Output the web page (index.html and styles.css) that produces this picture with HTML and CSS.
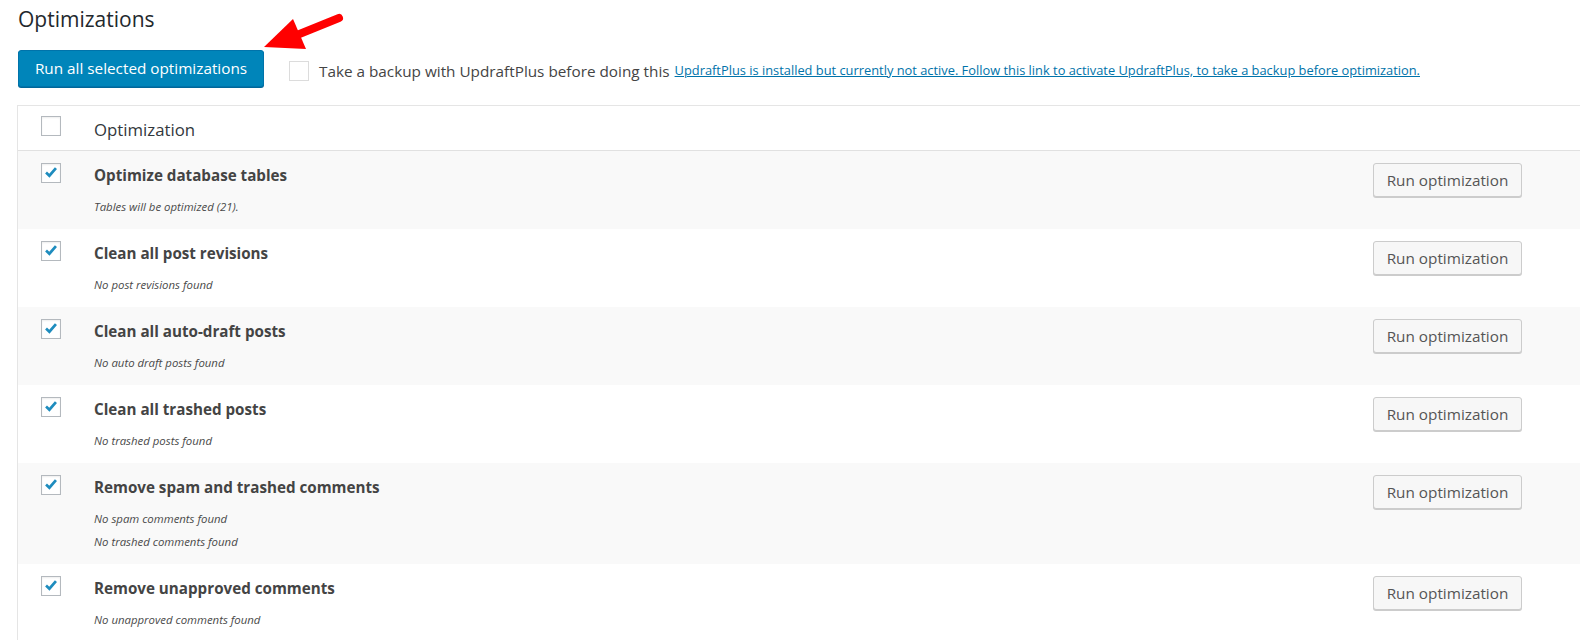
FILE: index.html
```html
<!DOCTYPE html>
<html lang="en">
<head>
<meta charset="utf-8">
<title>Optimizations</title>
<link rel="stylesheet" href="styles.css">
</head>
<body>
<div class="page">
  <h2 class="page-title">Optimizations</h2>
  <div class="toolbar">
    <button class="btn-primary">Run all selected optimizations</button>
    <label class="backup">
      <span class="cb"></span>
      <span class="backup-text">Take a backup with UpdraftPlus before doing this</span>
    </label>
    <a class="activate-link" href="#">UpdraftPlus is installed but currently not active. Follow this link to activate UpdraftPlus, to take a backup before optimization.</a>
    <svg class="arrow" width="90" height="50" viewBox="0 0 90 50">
      <line x1="42" y1="26" x2="84" y2="9" stroke="#f00" stroke-width="8" stroke-linecap="round"/>
      <polygon points="9,38 38,10 51,40" fill="#f00"/>
    </svg>
  </div>

  <div class="opt-table">
    <div class="head">
      <div class="cell-check"><span class="cb"></span></div>
      <div class="head-label">Optimization</div>
    </div>

    <div class="row alt">
      <div class="cell-check"><span class="cb checked"><svg viewBox="0 0 20 20"><path d="M4.5 9.5 L8.2 13 L15.5 4.5" fill="none" stroke="#1e8cbe" stroke-width="3" stroke-linejoin="miter"/></svg></span></div>
      <div class="cell-main">
        <div class="opt-title">Optimize database tables</div>
        <div class="opt-desc">Tables will be optimized (21).</div>
      </div>
      <div class="cell-action"><button class="btn-secondary">Run optimization</button></div>
    </div>

    <div class="row">
      <div class="cell-check"><span class="cb checked"><svg viewBox="0 0 20 20"><path d="M4.5 9.5 L8.2 13 L15.5 4.5" fill="none" stroke="#1e8cbe" stroke-width="3" stroke-linejoin="miter"/></svg></span></div>
      <div class="cell-main">
        <div class="opt-title">Clean all post revisions</div>
        <div class="opt-desc">No post revisions found</div>
      </div>
      <div class="cell-action"><button class="btn-secondary">Run optimization</button></div>
    </div>

    <div class="row alt">
      <div class="cell-check"><span class="cb checked"><svg viewBox="0 0 20 20"><path d="M4.5 9.5 L8.2 13 L15.5 4.5" fill="none" stroke="#1e8cbe" stroke-width="3" stroke-linejoin="miter"/></svg></span></div>
      <div class="cell-main">
        <div class="opt-title">Clean all auto-draft posts</div>
        <div class="opt-desc">No auto draft posts found</div>
      </div>
      <div class="cell-action"><button class="btn-secondary">Run optimization</button></div>
    </div>

    <div class="row">
      <div class="cell-check"><span class="cb checked"><svg viewBox="0 0 20 20"><path d="M4.5 9.5 L8.2 13 L15.5 4.5" fill="none" stroke="#1e8cbe" stroke-width="3" stroke-linejoin="miter"/></svg></span></div>
      <div class="cell-main">
        <div class="opt-title">Clean all trashed posts</div>
        <div class="opt-desc">No trashed posts found</div>
      </div>
      <div class="cell-action"><button class="btn-secondary">Run optimization</button></div>
    </div>

    <div class="row alt">
      <div class="cell-check"><span class="cb checked"><svg viewBox="0 0 20 20"><path d="M4.5 9.5 L8.2 13 L15.5 4.5" fill="none" stroke="#1e8cbe" stroke-width="3" stroke-linejoin="miter"/></svg></span></div>
      <div class="cell-main">
        <div class="opt-title">Remove spam and trashed comments</div>
        <div class="opt-desc">No spam comments found</div>
        <div class="opt-desc">No trashed comments found</div>
      </div>
      <div class="cell-action"><button class="btn-secondary">Run optimization</button></div>
    </div>

    <div class="row">
      <div class="cell-check"><span class="cb checked"><svg viewBox="0 0 20 20"><path d="M4.5 9.5 L8.2 13 L15.5 4.5" fill="none" stroke="#1e8cbe" stroke-width="3" stroke-linejoin="miter"/></svg></span></div>
      <div class="cell-main">
        <div class="opt-title">Remove unapproved comments</div>
        <div class="opt-desc">No unapproved comments found</div>
      </div>
      <div class="cell-action"><button class="btn-secondary">Run optimization</button></div>
    </div>
  </div>
</div>
</body>
</html>
```

FILE: styles.css
```css
html, body {
  margin: 0;
  padding: 0;
  background: #ffffff;
  overflow: hidden;
}

body {
  font-family: "Open Sans", "Noto Sans", "Liberation Sans", sans-serif;
  color: #444444;
}

.page {
  padding: 4px 0 0 17px;
}

.page-title {
  margin: 0 0 0 1px;
  font-size: 21px;
  line-height: 30px;
  font-weight: 400;
  color: #23282d;
}

.toolbar {
  position: relative;
  display: flex;
  align-items: center;
  margin-top: 15px;
  height: 38px;
}

.btn-primary {
  margin-left: 1px;
  height: 37px;
  width: 246px;
  padding: 0;
  font-family: inherit;
  font-size: 15.3px;
  color: #ffffff;
  background: #0085ba;
  border: 1px solid #0073aa;
  border-radius: 3px;
  box-shadow: 0 1px 0 #006799;
  cursor: pointer;
}

.backup {
  display: flex;
  align-items: center;
  margin-left: 25px;
  margin-top: 6px;
}

.backup .cb {
  border-color: #dcdcdc;
  box-shadow: none;
}

.backup-text {
  margin-left: 10px;
  font-size: 15.3px;
  color: #444444;
}

.activate-link {
  margin-left: 5px;
  margin-top: 3px;
  font-size: 12.85px;
  color: #0073aa;
  text-decoration: underline;
}

.arrow {
  position: absolute;
  left: 238px;
  top: -40px;
}

.cb {
  display: inline-block;
  box-sizing: border-box;
  width: 20px;
  height: 20px;
  border: 1px solid #b4b9be;
  background: #ffffff;
  box-shadow: inset 0 1px 2px rgba(0, 0, 0, 0.07);
}

.cb svg {
  display: block;
  width: 18px;
  height: 18px;
}

.opt-table {
  margin-top: 18px;
  border-top: 1px solid #e5e5e5;
  border-left: 1px solid #e5e5e5;
}

.head {
  display: flex;
  align-items: center;
  height: 44px;
  border-bottom: 1px solid #e1e1e1;
}

.cell-check {
  width: 76px;
  flex: none;
  padding-left: 23px;
  box-sizing: border-box;
}

.head-label {
  font-size: 16.8px;
  color: #32373c;
  padding-top: 2px;
}

.row {
  display: grid;
  grid-template-columns: 76px 1fr auto;
  padding: 12px 58px 11px 0;
}

.row.alt {
  background: #f9f9f9;
}

.opt-title {
  font-size: 15.2px;
  font-weight: 700;
  line-height: 24px;
  color: #444444;
}

.opt-desc {
  font-size: 11.4px;
  font-style: italic;
  line-height: 23px;
  color: #4a4a4a;
}

.opt-title + .opt-desc {
  margin-top: 8px;
}

.btn-secondary {
  width: 149px;
  height: 34px;
  padding: 0;
  font-family: inherit;
  font-size: 15.3px;
  color: #555555;
  background: #f7f7f7;
  border: 1px solid #cccccc;
  border-radius: 3px;
  box-shadow: 0 1px 0 #cccccc;
  cursor: pointer;
}
```
